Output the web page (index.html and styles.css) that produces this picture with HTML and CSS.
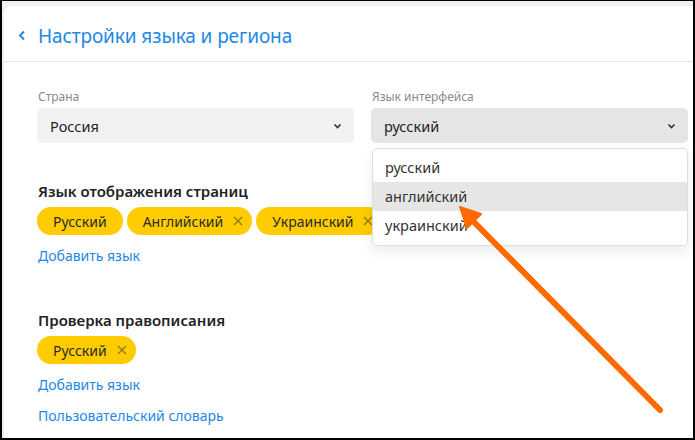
FILE: index.html
```html
<!DOCTYPE html>
<html lang="ru">
<head>
<meta charset="utf-8">
<title>Настройки языка и региона</title>
<link rel="stylesheet" href="styles.css">
</head>
<body>
<div class="frame">
  <div class="panel">
    <header class="head">
      <svg class="back" width="8" height="11" viewBox="0 0 8 11"><path d="M6 1.5L2 5.5l4 4" fill="none" stroke="#1e88e5" stroke-width="2"/></svg>
      <span class="title">Настройки языка и региона</span>
    </header>
    <main class="content">
      <div class="fields">
        <div class="field">
          <div class="label">Страна</div>
          <div class="select"><span>Россия</span><svg width="9" height="6" viewBox="0 0 9 6"><path d="M1.5 1.5l3 3 3-3" fill="none" stroke="#333" stroke-width="1.6"/></svg></div>
        </div>
        <div class="field">
          <div class="label">Язык интерфейса</div>
          <div class="select active"><span>русский</span><svg width="9" height="6" viewBox="0 0 9 6"><path d="M1.5 1.5l3 3 3-3" fill="none" stroke="#333" stroke-width="1.6"/></svg></div>
          <ul class="menu">
            <li>русский</li>
            <li class="hover">английский</li>
            <li>украинский</li>
          </ul>
        </div>
      </div>

      <section class="group first">
        <h2>Язык отображения страниц</h2>
        <div class="chips">
          <span class="chip">Русский</span>
          <span class="chip">Английский<svg class="x" width="10" height="10" viewBox="0 0 10 10"><path d="M1 1l8 8M9 1l-8 8" stroke="#8a7420" stroke-width="1.1"/></svg></span>
          <span class="chip">Украинский<svg class="x" width="10" height="10" viewBox="0 0 10 10"><path d="M1 1l8 8M9 1l-8 8" stroke="#8a7420" stroke-width="1.1"/></svg></span>
        </div>
        <a class="link">Добавить язык</a>
      </section>

      <section class="group second">
        <h2>Проверка правописания</h2>
        <div class="chips">
          <span class="chip">Русский<svg class="x" width="10" height="10" viewBox="0 0 10 10"><path d="M1 1l8 8M9 1l-8 8" stroke="#8a7420" stroke-width="1.1"/></svg></span>
        </div>
        <a class="link">Добавить язык</a>
        <a class="link">Пользовательский словарь</a>
      </section>
    </main>
    <svg class="arrow" width="695" height="440" viewBox="0 0 695 440">
      <line x1="658" y1="410" x2="468" y2="218" stroke="#ff6a00" stroke-width="6" stroke-linecap="round"/>
      <polygon points="458,207 479,214 465,228" fill="#ff6a00" stroke="#ff6a00" stroke-width="2" stroke-linejoin="round"/>
    </svg>
  </div>
</div>
</body>
</html>
```

FILE: styles.css
```css
* { box-sizing: border-box; }
html, body { margin: 0; padding: 0; }
body {
  width: 695px;
  height: 440px;
  overflow: hidden;
  background: #000;
  font-family: "Noto Sans", "Open Sans", sans-serif;
  color: #222;
}
.frame {
  width: 695px;
  height: 440px;
  border-style: solid;
  border-color: #000;
  border-width: 1px 2px 2px 2px;
  background: #f0f0f0;
  padding: 5px 0 0 2px;
}
.panel {
  position: relative;
  height: 100%;
  background: #fff;
  border-top-left-radius: 8px;
}
.head {
  height: 56px;
  display: flex;
  align-items: center;
  padding-left: 14px;
  padding-top: 4px;
  border-bottom: 1px solid #e4e4e4;
}
.back { margin-right: 12px; }
.title {
  font-size: 19px;
  color: #1e88e5;
  letter-spacing: -0.1px;
}
.content {
  padding: 27px 3px 0 33px;
}
.fields {
  display: flex;
  gap: 17px;
}
.field {
  position: relative;
  width: 317px;
}
.label {
  font-size: 12px;
  line-height: 16px;
  color: #8a8a8a;
  padding-left: 1px;
  margin-bottom: 3px;
}
.select {
  height: 35px;
  border-radius: 5px;
  background: #f2f2f2;
  display: flex;
  align-items: center;
  justify-content: space-between;
  padding: 0 12px 0 13px;
  font-size: 14.5px;
  color: #222;
}
.select.active { background: #e5e5e5; }
.menu {
  position: absolute;
  left: 1px;
  top: 59px;
  width: 316px;
  margin: 0;
  padding: 4px 0 5px;
  list-style: none;
  background: #fff;
  border: 1px solid #dedede;
  border-radius: 5px;
  box-shadow: 0 6px 14px rgba(0,0,0,0.08);
  z-index: 2;
}
.menu li {
  height: 29px;
  line-height: 29px;
  padding-left: 12px;
  font-size: 14.5px;
  color: #333;
}
.menu li.hover { background: #e6e6e6; }
.group { display: flex; flex-direction: column; align-items: flex-start; }
.group.first { margin-top: 38px; }
.group.second { margin-top: 33px; }
h2 {
  margin: 0 0 6px 1px;
  font-size: 15px;
  line-height: 20px;
  font-weight: 600;
  color: #222;
}
.chips { display: flex; gap: 4px; margin-bottom: 11px; }
.chip {
  height: 28px;
  border-radius: 14px;
  background: #ffcc00;
  display: flex;
  align-items: center;
  padding: 0 16px 0 16px;
  font-size: 14px;
  color: #2b2b2b;
}
.chip .x { margin-left: 10px; margin-right: -7px; }
.link {
  font-size: 14px;
  line-height: 20px;
  color: #1e88e5;
  margin: 0 0 11px 1px;
  cursor: pointer;
}
.arrow {
  position: absolute;
  left: -2px;
  top: -6px;
  pointer-events: none;
  z-index: 3;
}
```
